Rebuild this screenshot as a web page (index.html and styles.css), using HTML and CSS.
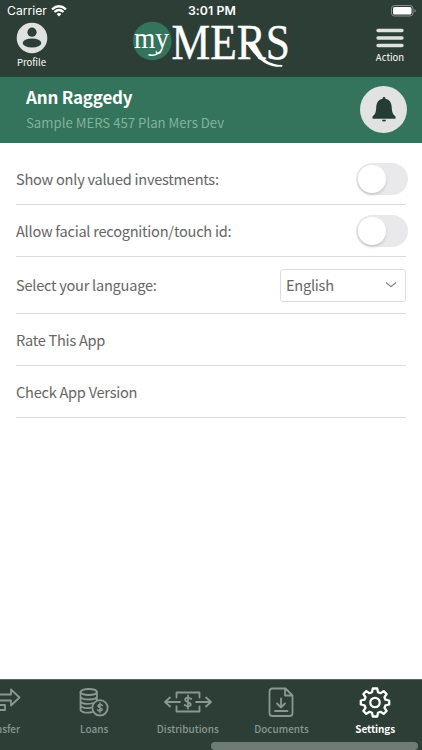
FILE: index.html
```html
<!DOCTYPE html>
<html lang="en">
<head>
<meta charset="utf-8">
<title>myMERS Settings</title>
<link rel="stylesheet" href="styles.css">
</head>
<body>
<div class="app">
  <header class="top">
    <div class="status">
      <div class="carrier"><span>Carrier</span>
        <svg width="16" height="12" viewBox="0 0 16 12" fill="none" stroke="#fff" stroke-width="2.3"><path d="M1 4.4Q8-1.8 15 4.4M3.5 7Q8 3.1 12.5 7"/><path d="M5.6 9Q8 7.2 10.4 9L8 11.5z" fill="#fff" stroke="none"/></svg>
      </div>
      <div class="time">3:01 PM</div>
      <svg class="battery" width="26" height="12" viewBox="0 0 26 12"><rect x=".5" y=".5" width="21.5" height="10.5" rx="3" fill="none" stroke="#87918c"/><rect x="2" y="2" width="18.5" height="7.5" rx="1.5" fill="#fff"/><path d="M23.5 4v3.6q1.3-.5 1.3-1.8T23.5 4" fill="#87918c"/></svg>
    </div>
    <div class="brandbar">
      <div class="shortcut profile">
        <svg width="32" height="32" viewBox="0 0 32 32"><circle cx="16" cy="16" r="15.3" fill="#e0e2e1"/><circle cx="16" cy="10.2" r="4.6" fill="#2c3e36"/><ellipse cx="16" cy="21" rx="9.3" ry="4.6" fill="#2c3e36"/></svg>
        <span>Profile</span>
      </div>
      <svg class="logo" width="160" height="50" viewBox="132 20 160 50">
        <circle cx="152.3" cy="41" r="19.3" fill="#34735c"/>
        <text class="my" x="134" y="47.500" textLength="35" lengthAdjust="spacingAndGlyphs">my</text>
        <text class="mers" x="171.500" y="59" textLength="118.500" lengthAdjust="spacingAndGlyphs">MERS</text>
        <path d="M251 44C258 54 266 64.800 282.500 65L282 66.800C265 67.500 257 58 247 44z" fill="#fff"/>
        <path d="M162 49C159 54.500 155 56.500 148.500 54.800" fill="none" stroke="#fff" stroke-width="1.500"/>
      </svg>
      <div class="shortcut action">
        <svg width="28" height="32" viewBox="0 0 28 32" stroke="#e0e2e1" stroke-width="3.300" stroke-linecap="round"><path d="M2 8.500H26M2 16H26M2 23.500H26"/></svg>
        <span>Action</span>
      </div>
    </div>
  </header>
  <section class="account">
    <div><h1>Ann Raggedy</h1><p>Sample MERS 457 Plan Mers Dev</p></div>
    <div class="bell"><svg width="24" height="26" viewBox="0 0 24 26" fill="#243c33"><path d="M12 0c1 0 1.400.7 1.400 1.700C17.500 2.500 19.500 5.500 19.700 10c.3 5 .8 7 3.800 9.500v2.200H.5v-2.200C3.500 17 4 15 4.300 10c.2-4.500 2.200-7.500 6.300-8.300C10.600.7 11 0 12 0zM9.800 22.700h4.400Q13.800 24.600 12 24.600T9.800 22.700z"/></svg></div>
  </section>
  <main class="settings">
    <div class="row"><span>Show only valued investments:</span><div class="switch"></div></div>
    <div class="row"><span>Allow facial recognition/touch id:</span><div class="switch"></div></div>
    <div class="row tall"><span>Select your language:</span>
      <div class="select"><span>English</span><svg width="12" height="8" viewBox="0 0 12 8" fill="none" stroke="#858585" stroke-width="1.300"><path d="M1 1.500Q5.500 5.500 6 5.500T11 1.500"/></svg></div>
    </div>
    <div class="row"><span>Rate This App</span></div>
    <div class="row"><span>Check App Version</span></div>
  </main>
  <nav class="tabs">
    <div class="tab">
      <svg width="48" height="32" viewBox="0 0 48 32" class="line"><path d="M12 7.500H35V2.500L43.500 10.500L35 18.500V13.500H12M12 18H29V23H12"/></svg>
      <span>Transfer</span>
    </div>
    <div class="tab">
      <svg width="32" height="32" viewBox="0 0 32 32" class="line"><ellipse cx="10.700" cy="5" rx="8.200" ry="3"/><path d="M2.500 5V22.500C2.500 25 8 26.500 14 25.200M18.900 5V13M2.500 9.400C3 13.500 18.500 13.500 18.900 9.400M2.500 13.800C3 17 10 17.700 15 16M2.500 18.200C3 21 9 21.800 13 20.600"/><circle cx="22" cy="20.800" r="7.700"/><path d="M24.500 18.500Q22 16.700 20.200 18.300C18.600 20.500 24.800 20.500 24.300 22.700Q22.500 24.800 19.500 23M22 16v9.600" stroke-width="1.500"/></svg>
      <span>Loans</span>
    </div>
    <div class="tab">
      <svg width="50" height="32" viewBox="0 0 50 32" class="line"><path d="M13.500 10.500V5.500H36.500V10.500M13.500 19.500V24.500H36.500V19.500M17 15H2M7 10.500L2 15L7 19.500M33 15H48M43 10.500L48 15L43 19.500"/><path d="M28.300 12Q25 9.500 22.500 11.500C20.300 15 28.500 14.500 27.800 18Q25.500 20.500 21.700 18M25 8.500v13"/></svg>
      <span>Distributions</span>
    </div>
    <div class="tab">
      <svg width="32" height="32" viewBox="0 0 32 32" class="line"><path d="M7.500 1.500H20.500L27.500 8.500V26Q27.500 29 24.500 29H7.500Q4.500 29 4.500 26V4.500Q4.500 1.500 7.500 1.500zM20 2V8.500H27M16 11.500V20.500M12 16.500L16 20.500L20 16.500M10 24H22.500"/></svg>
      <span>Documents</span>
    </div>
    <div class="tab active">
      <svg width="32" height="32" viewBox="0 0 32 32" class="line"><path d="M13.800 1.500H18.200L19 5.200L21.500 6.200L24.700 4.100L27.600 7L25.500 10.200L26.500 12.700L30.200 13.500V17.500L26.500 18.300L25.500 20.800L27.600 24L24.700 26.900L21.500 24.800L19 25.800L18.200 29.500H13.800L13 25.800L10.500 24.800L7.300 26.900L4.400 24L6.500 20.800L5.500 18.300L1.800 17.500V13.500L5.500 12.700L6.500 10.200L4.400 7L7.300 4.100L10.500 6.200L13 5.200z"/><circle cx="16" cy="15.500" r="4.700"/></svg>
      <span>Settings</span>
    </div>
    <div class="scrollthumb"></div>
  </nav>
</div>
</body>
</html>
```
FILE: styles.css
```css
* { box-sizing: border-box; }
body { margin: 0; font-family: "Noto Sans CJK SC", sans-serif; background: #fff; }
.app { width: 422px; height: 750px; display: flex; flex-direction: column; overflow: hidden; }
h1, p { margin: 0; }
.top { height: 77px; background: #2c3e36; border-bottom: 1px solid #29453a; color: #fff; }
.status { height: 20px; display: grid; grid-template-columns: 1fr auto 1fr; align-items: center; padding: 2px 5px 0 7px; font: 12.5px/18px Inter, sans-serif; }
.carrier { display: flex; gap: 4px; align-items: center; }
.carrier span { font-size: 12.2px; }
.time { font-weight: 600; font-size: 12.3px; letter-spacing: .1px; }
.battery { justify-self: end; }
.brandbar { height: 50px; display: grid; grid-template-columns: 63px 160px 64px; justify-content: space-between; }
.shortcut { display: flex; flex-direction: column; align-items: center; padding-top: 2px; font-size: 9.5px; line-height: 14px; }
.profile span { margin-top: 1px; }
.action span { margin-top: -4px; }
.logo { display: block; margin-left: 1px; overflow: visible; }
.my { font: 29px "Liberation Serif", serif; fill: #fff; }
.mers { font: 50px "Liberation Serif", serif; fill: #fff; stroke: #fff; stroke-width: .35; }
.account { height: 66px; background: #34735c; display: flex; justify-content: space-between; padding: 9px 15px 0 26px; }
.account h1 { color: #fff; font-size: 17px; line-height: 22px; font-weight: 700; letter-spacing: -.2px; }
.account p { color: #83b39f; font-size: 13.2px; line-height: 18px; margin-top: 6px; }
.bell { width: 47px; height: 47px; border-radius: 50%; background: #e0e3e1; display: flex; align-items: center; justify-content: center; }
.settings { flex: 1; padding: 10px 16px 0; color: #666; font-size: 14.6px; letter-spacing: -.26px; }
.row { height: 52px; border-bottom: 1px solid #dcdcdc; display: flex; justify-content: space-between; align-items: center; }
.row > span, .select span { margin-top: -1px; }
.tall { height: 57px; }
.switch { width: 52px; height: 32px; margin-right: -2px; border-radius: 16px; background: #e9e9eb; padding: 2px; }
.switch::before { content: ""; display: block; width: 28px; height: 28px; border-radius: 50%; background: #fff; box-shadow: 0 2px 3px #0002; }
.select { width: 126px; height: 33px; border: 1px solid #ddd; border-radius: 3px; display: flex; align-items: center; justify-content: space-between; padding: 0 8px 0 5px; }
.tabs { position: relative; height: 71px; background: #2c3e36; border-top: 1px solid #596860; display: grid; grid-template-columns: repeat(5, 93.7px); justify-content: end; }
.tab { display: flex; flex-direction: column; align-items: center; padding-top: 7px; color: #8a9892; font-size: 10px; font-weight: 500; line-height: 16px; }
.tab span { margin-top: 2px; }
.tab.active { color: #fff; font-weight: 700; }
.line { fill: none; stroke: currentColor; stroke-width: 1.8; stroke-linejoin: round; stroke-linecap: round; }
.active .line { stroke-width: 2.3; }
.active span { letter-spacing: -.1px; }
.scrollthumb { position: absolute; left: 211px; bottom: 0; width: 207px; height: 8px; border-radius: 4px; background: #6e7c75; }
```
